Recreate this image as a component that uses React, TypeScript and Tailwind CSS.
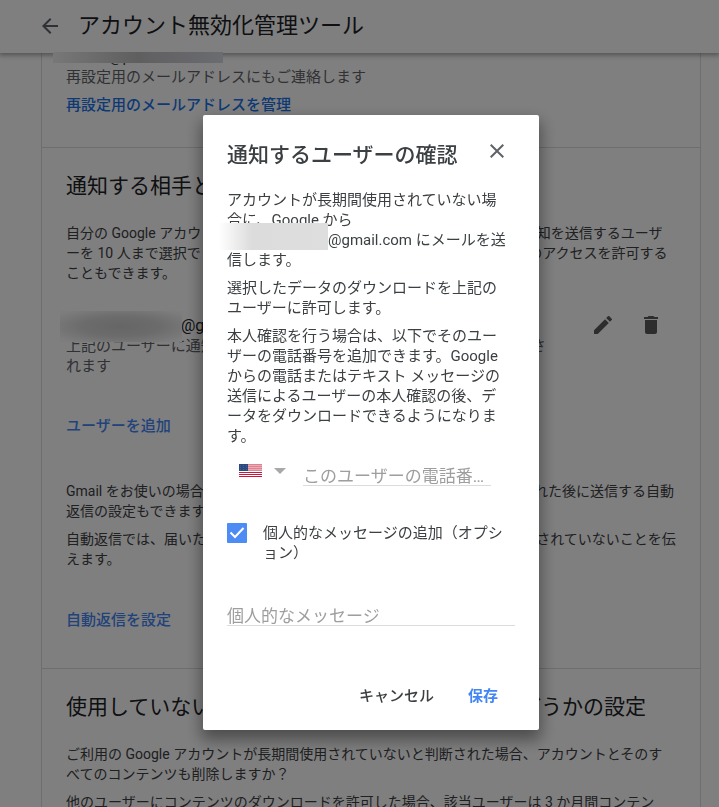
import type { ReactNode } from "react";

const NOTIFY_NOTE =
  "上記のユーザーに通知され、選択されたデータのダウンロードも許可されます";

function Paragraph({ children, className = "" }: { children: ReactNode; className?: string }) {
  return <p className={`text-sm leading-5 text-[#3c4043] ${className}`}>{children}</p>;
}

function SectionTitle({ children }: { children: ReactNode }) {
  return (
    <h2 className="overflow-hidden text-[21px] leading-7 whitespace-nowrap text-[#202124]">
      {children}
    </h2>
  );
}

function TextLink({ children, className = "" }: { children: ReactNode; className?: string }) {
  return (
    <a href="#" className={`block w-fit text-[15px] leading-5 font-medium ${className}`}>
      {children}
    </a>
  );
}

function IconButton({ label, path }: { label: string; path: string }) {
  return (
    <button type="button" aria-label={label} className="size-6 text-[#5a5a5a]">
      <svg viewBox="0 0 24 24" className="size-6 fill-current" aria-hidden="true">
        <path d={path} />
      </svg>
    </button>
  );
}

function UsFlag() {
  return (
    <svg viewBox="0 0 23 13" className="h-[13px] w-[23px]" aria-hidden="true">
      <rect width="23" height="13" fill="#fff" />
      <rect width="23" height="7" fill="#ecaab4" />
      {[0, 2, 4, 6].map((y) => (
        <rect key={y} y={y} width="23" height="1" fill="#dd8492" />
      ))}
      {[8, 10, 12].map((y) => (
        <rect key={y} y={y} width="23" height="1" fill="#c8193c" />
      ))}
      <rect width="9" height="7" fill="#2c4a80" />
      {[1, 3, 5].map((y) => (
        <g key={y} fill="#46608f">
          <rect x="1" y={y} width="1" height="1" />
          <rect x="4" y={y} width="1" height="1" />
          <rect x="7" y={y} width="1" height="1" />
        </g>
      ))}
    </svg>
  );
}

function SettingsPage() {
  return (
    <div className="h-screen overflow-hidden bg-white">
      <header className="relative z-10 flex h-[53px] items-center gap-4 bg-white pb-0.5 pl-[38px] shadow-[0_1px_5px_1px_rgba(60,64,67,0.5)]">
        <button type="button" aria-label="戻る" className="size-6 text-[#5f6368]">
          <svg viewBox="0 0 24 24" className="size-6 fill-current" aria-hidden="true">
            <path d="M20 11H7.83l5.59-5.59L12 4l-8 8 8 8 1.41-1.41L7.83 13H20v-2z" />
          </svg>
        </button>
        <h1 className="text-[22px] leading-8 text-[#202124]">アカウント無効化管理ツール</h1>
      </header>

      <main className="mr-[18px] ml-[41px] border-x border-[#dadce0]">
        <section className="relative border-b border-[#dadce0] px-6 pb-8">
          <div className="flex h-[14px] items-end pl-[43px] text-[15px] leading-5 text-[#3c4043]">
            @p
          </div>
          <div className="absolute -top-px left-[11px] z-20 h-[11px] w-[170px] bg-linear-to-r from-[#f0f0f0] via-[#c0bec0] to-[#d5d9e2]" />
          <p className="text-[15px] leading-5 text-[#5f6368]">
            再設定用のメールアドレスにもご連絡します
          </p>
          <TextLink className="mt-2 text-[#1a73e8]">再設定用のメールアドレスを管理</TextLink>
        </section>

        <section className="border-b border-[#dadce0] px-6 pt-6 pb-[38px]">
          <SectionTitle>通知する相手と公開するデータの選択</SectionTitle>
          <Paragraph className="mt-[23px]">
            自分の Google アカウントが長期間使用されていないと判断された場合に通知を送信するユーザ
            <br />
            ーを 10 人まで選択できます。この 10 人のユーザーにもデータのすべてへのアクセスを許可する
            <br />
            こともできます。
          </Paragraph>

          <div className="mt-[30px] flex items-start justify-between">
            <div className="relative w-[490px]">
              <p className="pt-px pl-[115px] text-base leading-6 text-[#202124]">@gmail.com</p>
              <p className="-mt-0.5 text-[15px] leading-5 text-[#5f6368]">{NOTIFY_NOTE}</p>
              <div className="absolute -top-0.5 -left-1.5 h-[31px] w-[122px] bg-[radial-gradient(ellipse_at_center,#cccccc_0%,#d8d8d8_45%,#fafafa_90%)]" />
            </div>
            <div className="flex gap-6 pr-[13px]">
              <IconButton
                label="編集"
                path="M3 17.25V21h3.75L17.81 9.94l-3.75-3.75L3 17.25zM20.71 7.04a1 1 0 0 0 0-1.41l-2.34-2.34a1 1 0 0 0-1.41 0l-1.83 1.83 3.75 3.75 1.83-1.83z"
              />
              <IconButton
                label="削除"
                path="M6 19c0 1.1.9 2 2 2h8c1.1 0 2-.9 2-2V7H6v12zM19 4h-3.5l-1-1h-5l-1 1H5v2h14V4z"
              />
            </div>
          </div>

          <TextLink className="mt-10 text-[#4285f4]">ユーザーを追加</TextLink>

          <Paragraph className="mt-[45px]">
            Gmail をお使いの場合は、アカウントが 18 か月使用されていないと判断された後に送信する自動
            <br />
            返信の設定もできます。
          </Paragraph>
          <Paragraph className="mt-2">
            自動返信では、届いたメールの送信者に、このアカウントが 18 か月も使用されていないことを伝
            <br />
            えます。
          </Paragraph>
          <TextLink className="mt-[41px] text-[#4285f4]">自動返信を設定</TextLink>
        </section>

        <section className="px-6 pt-6">
          <SectionTitle>使用していない Google アカウントを削除するかどうかの設定</SectionTitle>
          <Paragraph className="mt-[23px]">
            ご利用の Google アカウントが長期間使用されていないと判断された場合、アカウントとそのす
            <br />
            べてのコンテンツも削除しますか？
          </Paragraph>
          <Paragraph className="mt-2">
            他のユーザーにコンテンツのダウンロードを許可した場合、該当ユーザーは 3 か月間コンテン
          </Paragraph>
        </section>
      </main>
    </div>
  );
}

function ConfirmDialog() {
  return (
    <div
      role="dialog"
      aria-modal="true"
      aria-labelledby="dialog-title"
      className="w-[336px] rounded-xs bg-white px-6 pt-[26px] pb-[18px] text-[#3c4043] shadow-[0_8px_16px_2px_rgba(0,0,0,0.4)]"
    >
      <div className="flex items-start justify-between pr-1.5">
        <h2 id="dialog-title" className="text-[21px] leading-7 font-medium">
          通知するユーザーの確認
        </h2>
        <button type="button" aria-label="閉じる" className="-mt-0.5 size-6 text-[#5f6368]">
          <svg viewBox="0 0 24 24" className="size-6 fill-current" aria-hidden="true">
            <path d="M19 6.41 17.59 5 12 10.59 6.41 5 5 6.41 10.59 12 5 17.59 6.41 19 12 13.41 17.59 19 19 17.59 13.41 12z" />
          </svg>
        </button>
      </div>

      <div className="mt-[21px] space-y-2 text-[15px] leading-5">
        <p>
          アカウントが長期間使用されていない場
          <br />
          合に、Google から
          <br />
          <span className="relative inline-block pl-[101px]">
            <span className="absolute -top-[7px] -left-2 h-[27px] w-[109px] bg-linear-to-r from-white via-[#dcdcdc] via-30% to-[#dedede]" />
            @gmail.com
          </span>{" "}
          にメールを送
          <br />
          信します。
        </p>
        <p>
          選択したデータのダウンロードを上記の
          <br />
          ユーザーに許可します。
        </p>
        <p>
          本人確認を行う場合は、以下でそのユー
          <br />
          ザーの電話番号を追加できます。Google
          <br />
          からの電話またはテキスト メッセージの
          <br />
          送信によるユーザーの本人確認の後、デ
          <br />
          ータをダウンロードできるようになりま
          <br />
          す。
        </p>
      </div>

      <div className="mt-3 flex items-start pr-6 pl-3">
        <label className="relative flex h-[25px] w-[64px] shrink-0 items-center gap-3">
          <UsFlag />
          <svg viewBox="0 0 12 6" className="h-1.5 w-3 fill-[#a8a8a8]" aria-hidden="true">
            <path d="M0 0h12L6 6z" />
          </svg>
          <select aria-label="国" defaultValue="US" className="absolute inset-0 opacity-0">
            <option value="US">アメリカ合衆国</option>
            <option value="JP">日本</option>
          </select>
        </label>
        <input
          type="tel"
          aria-label="このユーザーの電話番号"
          placeholder="このユーザーの電話番号を入力"
          className="h-7 w-full min-w-0 border-b border-[#dadce0] pt-2 text-[17px] leading-5 text-ellipsis outline-none placeholder:text-[#9e9e9e]"
        />
      </div>

      <div className="mt-[37px] flex items-start gap-4">
        <span className="relative size-5 shrink-0">
          <input
            id="add-message"
            type="checkbox"
            defaultChecked
            className="block size-5 appearance-none rounded-[1px] bg-[#4d8bf5]"
          />
          <svg
            viewBox="0 0 20 20"
            className="pointer-events-none absolute inset-0 size-5 fill-none stroke-white stroke-2"
            aria-hidden="true"
          >
            <path d="M3.5 9.5 8 14 16.5 5" />
          </svg>
        </span>
        <label htmlFor="add-message" className="text-[15px] leading-5">
          個人的なメッセージの追加（オプシ
          <br />
          ョン）
        </label>
      </div>

      <input
        type="text"
        aria-label="個人的なメッセージ"
        placeholder="個人的なメッセージ"
        className="mt-[35px] block h-7 w-full border-b border-[#dadce0] pt-2 text-[17px] leading-5 outline-none placeholder:text-[#9e9e9e]"
      />

      <div className="mt-[54px] flex justify-end gap-[18px] text-[15px] leading-5">
        <button type="button" className="h-8 px-2 font-medium">
          キャンセル
        </button>
        <button type="button" className="mr-[9px] h-8 px-2 font-bold text-[#4285f4]">
          保存
        </button>
      </div>
    </div>
  );
}

export default function App() {
  return (
    <div lang="ja" className="font-[Roboto,'Noto_Sans_CJK_JP',sans-serif]">
      <SettingsPage />
      <div className="fixed inset-0 z-30 flex items-start justify-center bg-black/50 pt-[115px] pl-[23px]">
        <ConfirmDialog />
      </div>
    </div>
  );
}
